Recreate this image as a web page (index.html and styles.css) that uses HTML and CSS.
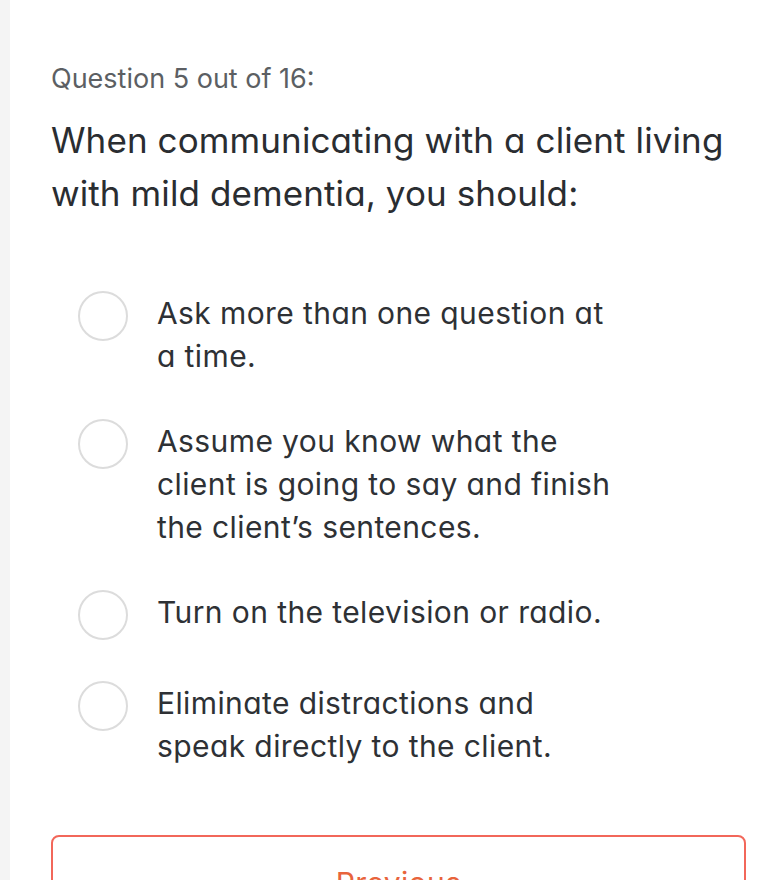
FILE: index.html
```html
<!DOCTYPE html>
<html lang="en">
<head>
  <meta charset="UTF-8" />
  <title>Quiz</title>
  <link rel="stylesheet" href="styles.css">
</head>
<body>
  <div class="page">
    <div class="rail"></div>
    <div class="quiz">
      <p class="counter">Question 5 out of 16:</p>
      <h2 class="question">When communicating with a client living with mild dementia, you should:</h2>

      <div class="options">
        <label class="option">
          <span class="radio"></span>
          <span class="answer">Ask more than one question at a time.</span>
        </label>
        <label class="option">
          <span class="radio"></span>
          <span class="answer">Assume you know what the client is going to say and finish the client’s sentences.</span>
        </label>
        <label class="option">
          <span class="radio"></span>
          <span class="answer">Turn on the television or radio.</span>
        </label>
        <label class="option">
          <span class="radio"></span>
          <span class="answer">Eliminate distractions and speak directly to the client.</span>
        </label>
      </div>

      <button class="prev">Previous</button>
    </div>
  </div>
</body>
</html>
```

FILE: styles.css
```css
body {
  margin: 0;
  font-family: Inter, 'Noto Sans', sans-serif;
  font-feature-settings: "cv11";
  background: white;
}

.page {
  display: flex;
  min-height: 880px;
}

.rail {
  width: 10px;
  flex-shrink: 0;
  background: #f4f4f4;
}

.quiz {
  width: 695px;
  padding: 58px 0 0 41px;
}

.counter {
  margin: 0;
  font-size: 27px;
  line-height: 42px;
  color: #5c5f63;
}

.question {
  margin: 14px 0 0;
  font-size: 35px;
  font-weight: 400;
  line-height: 1.5;
  letter-spacing: 0.1px;
  color: #2a2d31;
}

.options {
  display: flex;
  flex-direction: column;
  gap: 42px;
  margin-top: 73px;
  padding-left: 27px;
}

.option {
  display: flex;
  align-items: flex-start;
  gap: 29px;
}

.radio {
  width: 46px;
  height: 46px;
  flex-shrink: 0;
  margin-top: -1px;
  border: 2px solid #dcdcdc;
  border-radius: 50%;
}

.answer {
  font-size: 30px;
  line-height: 43px;
  letter-spacing: 0.4px;
  color: #2e3135;
  max-width: 462px;
}

.prev {
  display: block;
  width: 100%;
  margin-top: 67px;
  padding: 28px 0 24px;
  border: 2px solid #f2675a;
  border-radius: 8px;
  background: white;
  font-family: inherit;
  font-feature-settings: inherit;
  font-size: 30px;
  letter-spacing: 0.4px;
  color: #e8643c;
}
```
